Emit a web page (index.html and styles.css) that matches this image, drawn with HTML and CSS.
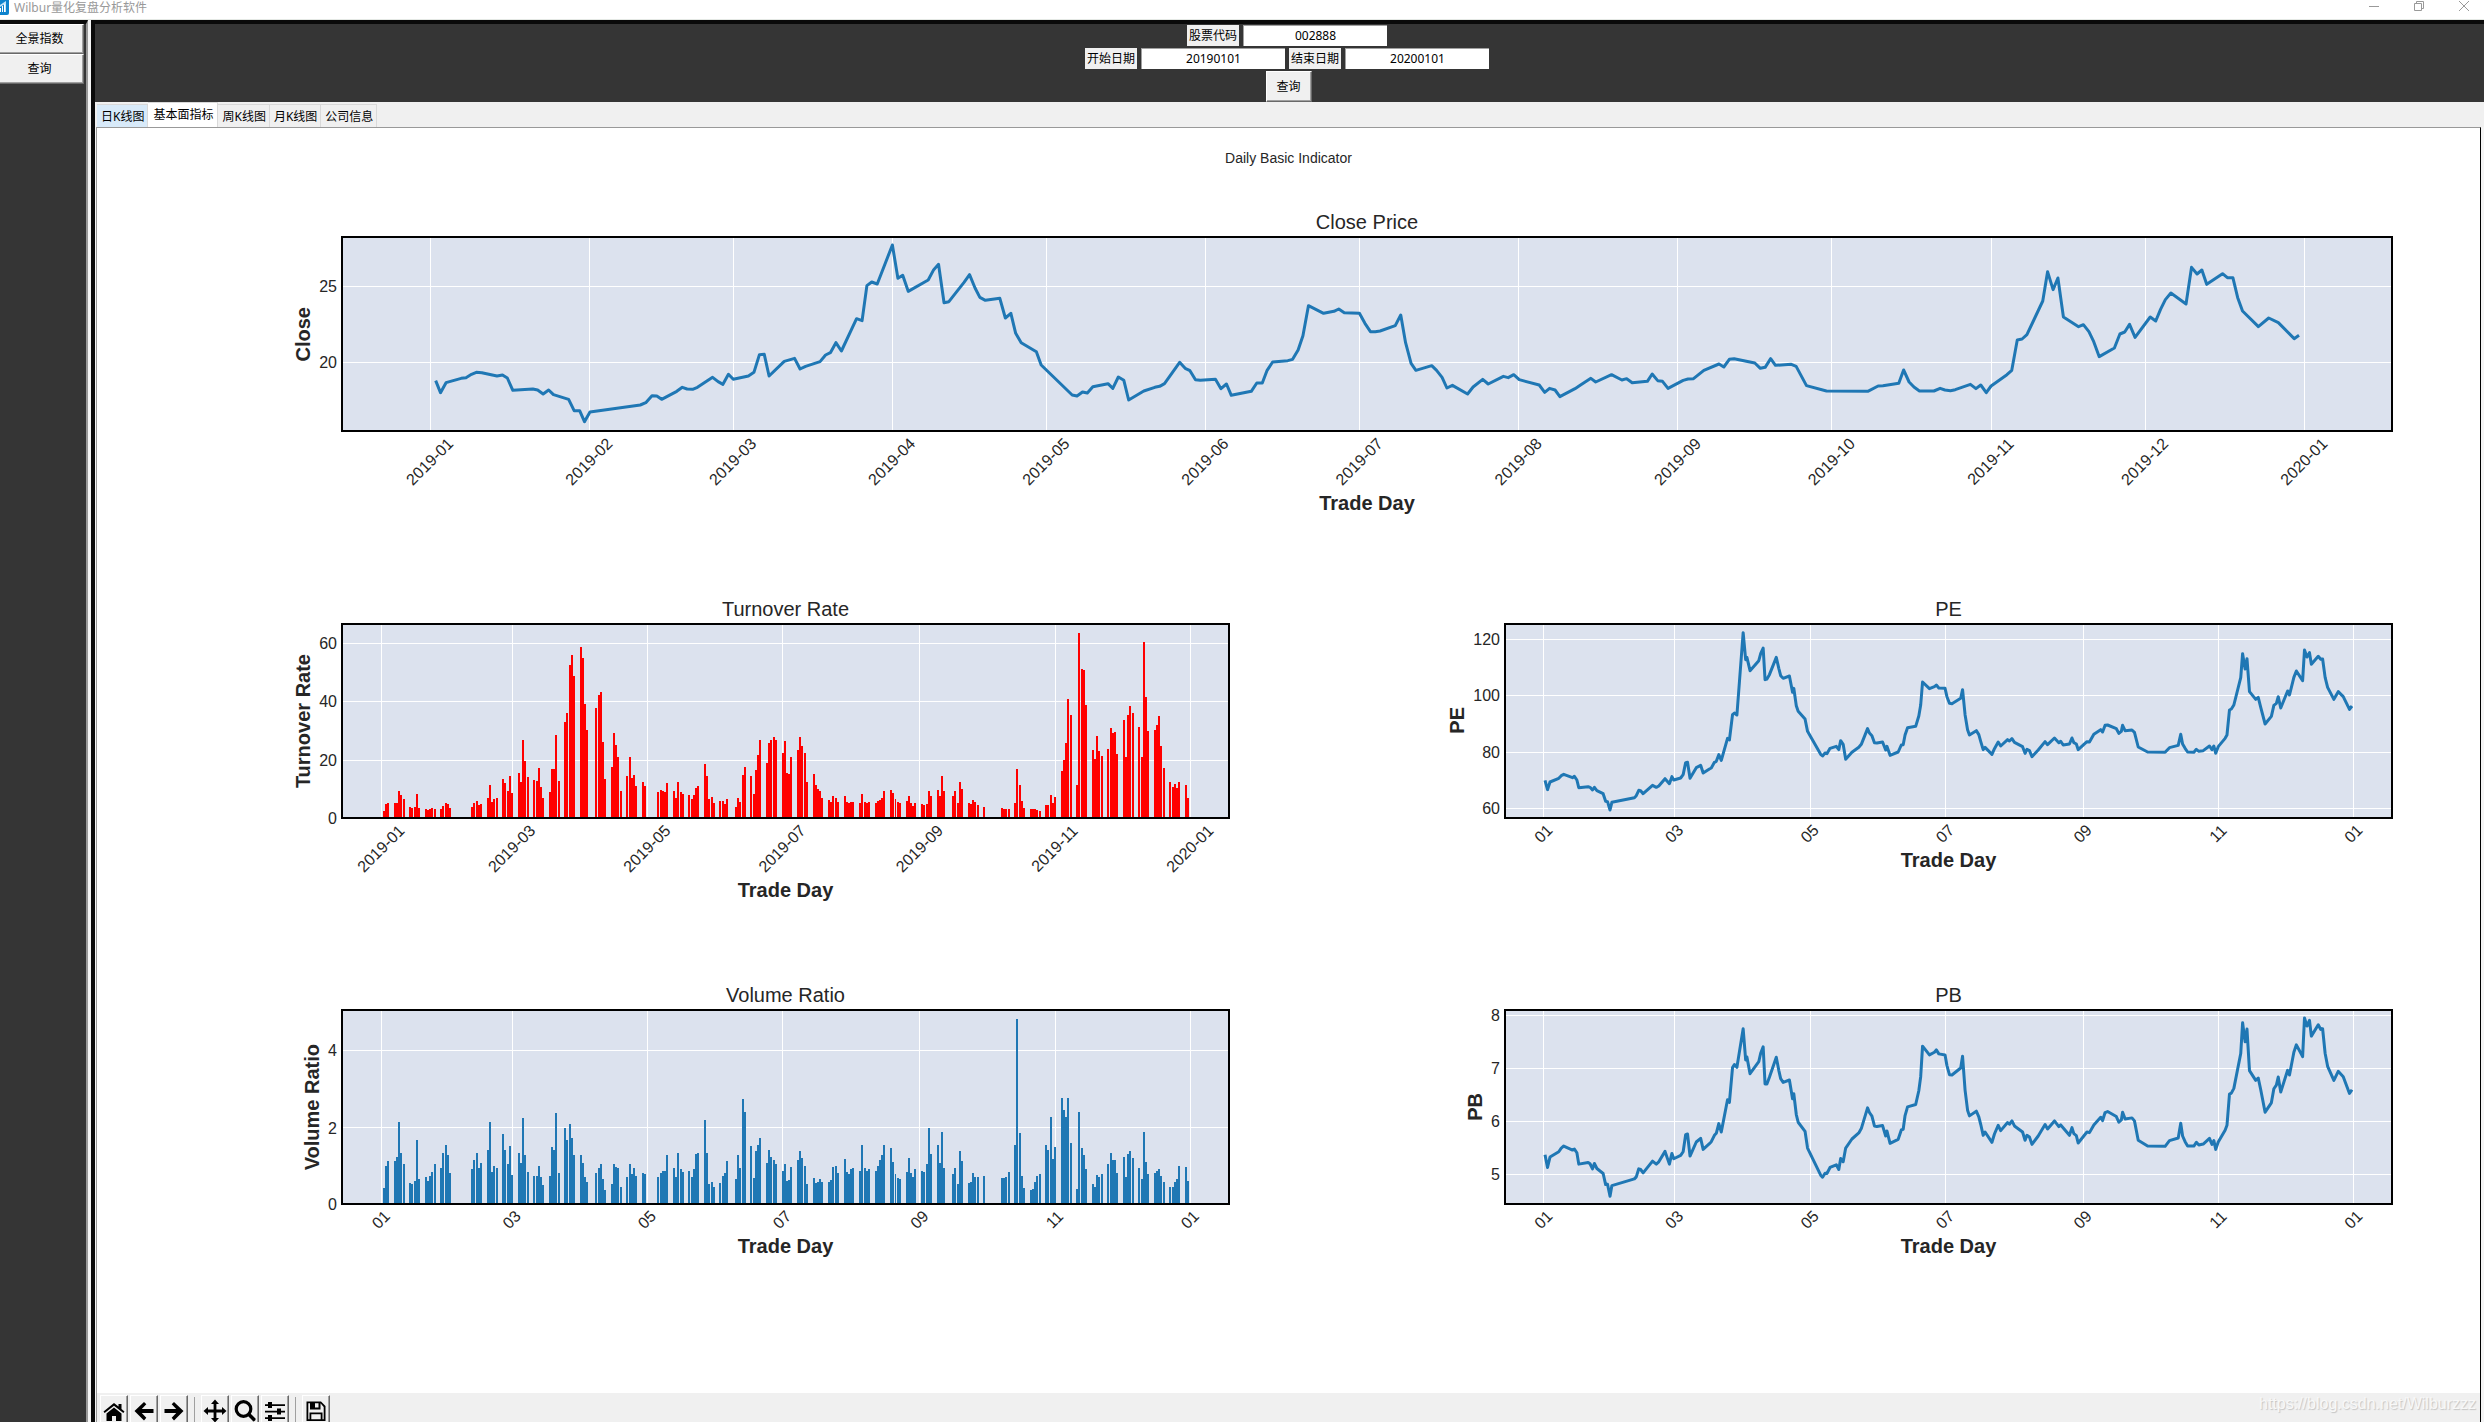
FILE: index.html
```html
<!DOCTYPE html>
<html lang="zh-CN">
<head>
<meta charset="utf-8">
<title>Wilbur量化复盘分析软件</title>
<link rel="stylesheet" href="styles.css">
</head>
<body>
<header class="titlebar">
  <svg class="app-icon" width="9" height="15" viewBox="0 0 9 15" aria-hidden="true">
    <path d="M0 0H9V13Q9 15 7 15H0Z" fill="#0e83cd"/>
    <path d="M0 8H1V12H0ZM2 6H3V12H2ZM4 4H6V12H4Z" fill="#fff"/>
    <path d="M0 5L6 1V12H5V4L0 7Z" fill="#bfe2f7"/>
  </svg>
  <h1 class="app-title">Wilbur量化复盘分析软件</h1>
  <div class="window-controls">
    <button type="button" aria-label="最小化"><svg width="10" height="10" viewBox="0 0 10 10"><path d="M0 5.5H10"/></svg></button>
    <button type="button" aria-label="还原"><svg width="10" height="10" viewBox="0 0 10 10"><path d="M.5 2.5H7.5V9.5H.5ZM2.5 2.5V.5H9.5V7.5H7.5"/></svg></button>
    <button type="button" aria-label="关闭"><svg width="10" height="10" viewBox="0 0 10 10"><path d="M0 0L10 10M10 0L0 10"/></svg></button>
  </div>
</header>
<div class="workspace">
  <nav class="sidebar">
    <button type="button" class="raised">全景指数</button>
    <button type="button" class="raised">查询</button>
  </nav>
  <main class="main">
    <form class="query">
      <div class="query-row">
        <label for="code">股票代码</label><input id="code" type="text" value="002888">
      </div>
      <div class="query-row">
        <label for="start">开始日期</label><input id="start" type="text" value="20190101">
        <label for="end">结束日期</label><input id="end" type="text" value="20200101">
      </div>
      <button type="button" class="raised query-button">查询</button>
    </form>
    <div class="tabs" role="tablist">
      <button type="button" role="tab" class="tab tab-hover">日K线图</button>
      <button type="button" role="tab" class="tab tab-selected" aria-selected="true">基本面指标</button>
      <button type="button" role="tab" class="tab">周K线图</button>
      <button type="button" role="tab" class="tab">月K线图</button>
      <button type="button" role="tab" class="tab">公司信息</button>
    </div>
    <section class="pane">
      <div class="canvas">
        <h2 class="canvas-title">Daily Basic Indicator</h2>
        <div class="charts">
          <figure class="chart chart-wide long-ticks" data-chart="close">
            <figcaption>Close Price</figcaption>
            <div class="y-side"><span class="y-label">Close</span><svg class="y-axis"></svg></div>
            <svg class="plot"></svg><svg class="x-axis"></svg>
            <span class="x-label">Trade Day</span>
          </figure>
          <figure class="chart long-ticks" data-chart="turnover">
            <figcaption>Turnover Rate</figcaption>
            <div class="y-side"><span class="y-label">Turnover Rate</span><svg class="y-axis"></svg></div>
            <svg class="plot"></svg><svg class="x-axis"></svg>
            <span class="x-label">Trade Day</span>
          </figure>
          <figure class="chart" data-chart="pe">
            <figcaption>PE</figcaption>
            <div class="y-side"><span class="y-label">PE</span><svg class="y-axis"></svg></div>
            <svg class="plot"></svg><svg class="x-axis"></svg>
            <span class="x-label">Trade Day</span>
          </figure>
          <figure class="chart" data-chart="volume">
            <figcaption>Volume Ratio</figcaption>
            <div class="y-side"><span class="y-label">Volume Ratio</span><svg class="y-axis"></svg></div>
            <svg class="plot"></svg><svg class="x-axis"></svg>
            <span class="x-label">Trade Day</span>
          </figure>
          <figure class="chart" data-chart="pb">
            <figcaption>PB</figcaption>
            <div class="y-side"><span class="y-label">PB</span><svg class="y-axis"></svg></div>
            <svg class="plot"></svg><svg class="x-axis"></svg>
            <span class="x-label">Trade Day</span>
          </figure>
        </div>
      </div>
      <div class="toolbar" role="toolbar">
        <button type="button" class="tool" aria-label="Home"><svg viewBox="0 0 24 24"><path d="M12 8.5L4.500 14.500V22H10V17H14V22H19.500V14.500Z"/><path d="M12 4L1.500 12.500L2.700 14L12 6.700L21.300 14L22.500 12.500L19.500 10V5H16.500V7.600Z"/></svg></button>
        <button type="button" class="tool" aria-label="Back"><svg viewBox="0 0 24 24"><path d="M12 3L14.300 5.300L9.800 9.900H21.500V14.100H9.800L14.300 18.700L12 21.500L2.500 12Z"/></svg></button>
        <button type="button" class="tool" aria-label="Forward"><svg viewBox="0 0 24 24"><path d="M12 3L9.700 5.300L14.200 9.900H2.500V14.100H14.200L9.700 18.700L12 21.500L21.500 12Z"/></svg></button>
        <span class="separator"></span>
        <button type="button" class="tool" aria-label="Pan"><svg viewBox="0 0 24 24"><path d="M12 .5L16 5H13.400V10.600H19V8L23.500 12L19 16V13.400H13.400V19H16L12 23.500L8 19H10.600V13.400H5V16L.5 12L5 8V10.600H10.600V5H8Z"/></svg></button>
        <button type="button" class="tool" aria-label="Zoom"><svg viewBox="0 0 24 24"><circle cx="10.500" cy="10" r="7.300" fill="none" stroke="#000" stroke-width="3.200"/><path d="M14.500 16.500L17 14L22.500 19.500Q23 21 21.500 22T19.500 21.500Z"/></svg></button>
        <button type="button" class="tool" aria-label="Subplots"><svg viewBox="0 0 24 24"><path d="M2 5.200H5V3H9V5.200H22V7H9V9H5V7H2ZM2 11.700H14V9.500H18V11.700H22V13.500H18V15.500H14V13.500H2ZM2 18.200H5V16H9V18.200H22V20H9V22H5V20H2Z"/></svg></button>
        <span class="separator"></span>
        <button type="button" class="tool" aria-label="Save"><svg viewBox="0 0 24 24"><path fill-rule="evenodd" d="M2.500 2.500H17L21.500 7V22H2.500ZM4.300 4.300V20.200H5.500V13.500H18.500V20.200H19.700V8L16.500 4.300V10.500H6V4.300ZM11 4.300V8.500H14.500V4.300ZM7.300 15.200V20.200H16.700V15.200Z"/></svg></button>
      </div>
    </section>
  </main>
</div>
<div class="watermark">https://blog.csdn.net/Wilburzzz</div>
<script src="charts.js"></script>
</body>
</html>
```

FILE: styles.css
```css
* { box-sizing: border-box; }

body {
  margin: 0;
  height: 100vh;
  display: flex;
  flex-direction: column;
  overflow: hidden;
  position: relative;
  background: #f0f0f0;
  color: #000;
  font: 12px/16px "Noto Sans", "Noto Sans CJK SC", sans-serif;
}

button, input {
  font: inherit;
  color: inherit;
  border-radius: 0;
  margin: 0;
  padding: 0;
}

/* window title bar */
.titlebar {
  flex: none;
  display: flex;
  align-items: flex-start;
  height: 20px;
  background: #fff;
  border-bottom: 1px solid #e4e8e4;
  color: #999;
}
.app-icon { flex: none; }
.app-title {
  margin: 0 auto 0 5px;
  font-size: 12px;
  line-height: 16px;
  font-weight: 400;
}
.window-controls {
  display: flex;
  gap: 35px;
  padding: 1px 15px 0 0;
}
.window-controls button {
  display: flex;
  border: 0;
  background: none;
}
.window-controls path { fill: none; stroke: #999; }

.workspace {
  flex: 1;
  min-height: 0;
  display: flex;
  background: #f4f4f4;
}

.raised {
  background: #f0f0f0;
  border: 1px solid;
  border-color: #fff #696969 #696969 #fff;
  box-shadow: inset -1px -1px #a0a0a0;
}

.sidebar {
  flex: none;
  width: 88px;
  display: flex;
  flex-direction: column;
  background: #353535;
  border-top: 4px solid #0a0a0a;
  border-right: 2px solid #999;
  padding-right: 2px;
  margin-right: 3px;
}
.sidebar .raised { height: 30px; padding-right: 4px; border-left: 0; }

.main {
  flex: 1;
  min-width: 0;
  display: flex;
  flex-direction: column;
  border: solid #0a0a0a;
  border-width: 4px 0 0 4px;
}

/* query form */
.query {
  flex: none;
  display: flex;
  flex-direction: column;
  align-items: center;
  padding-top: 1px;
  padding-right: 5px;
  background: #353535;
}
.query-row { display: flex; gap: 4px; padding-bottom: 2px; }
.query label {
  width: 52px;
  line-height: 21px;
  text-align: center;
  background: #f0f0f0;
}
.query input {
  width: 144px;
  height: 21px;
  padding-bottom: 1px;
  text-align: center;
  background: #fff;
  border: 0;
  border-top: 1px solid #a0a0a0;
  border-left: 1px solid #a0a0a0;
}
.query-button { width: 46px; height: 31px; margin-left: 3px; }

/* notebook tabs */
.tabs {
  flex: none;
  display: flex;
  align-items: flex-end;
  height: 25px;
  padding-left: 2px;
  background: #f0f0f0;
}
.tab {
  height: 23px;
  padding: 1px 3px 0 4px;
  background: #f0f0f0;
  border: 1px solid #d9d9d9;
  border-left: 0;
  border-bottom: 0;
}
.tab-hover { background: #d8eaf9; }
.tab-selected { height: 25px; padding: 0 4px 1px 5px; background: #fff; }

.pane {
  flex: 1;
  min-height: 0;
  display: flex;
  flex-direction: column;
  margin: 0 3px 0 1px;
  background: #fff;
  border: 1px solid #999;
  border-right-color: #000;
  border-bottom: 0;
}

/* figure canvas */
.canvas {
  flex: 1;
  display: flex;
  flex-direction: column;
  padding: 20px 88px 26px 165px;
  color: #262626;
  font-family: "Liberation Sans", Arial, sans-serif;
}
.canvas-title {
  margin: 0;
  /* the title centres on the canvas, the plots on the axes area */
  padding-right: 77px;
  height: 59px;
  font-size: 14px;
  line-height: 20px;
  font-weight: 400;
  text-align: center;
}
.charts {
  flex: 1;
  display: grid;
  grid-template-columns: 1fr 1fr;
  grid-template-rows: repeat(3, 1fr);
  column-gap: 196px;
}
.chart {
  margin: 0;
  display: grid;
  grid-template-columns: 80px 1fr;
  grid-template-rows: 30px 194px 30px 24px;
  grid-template-areas: ". title" "side plot" ". ticks" ". label";
}
.chart-wide { grid-column: 1 / -1; }
.long-ticks { grid-template-rows: 30px 194px 60px 24px; }
.chart figcaption {
  grid-area: title;
  font-size: 20px;
  line-height: 30px;
  text-align: center;
}
.y-side {
  grid-area: side;
  display: flex;
  justify-content: flex-end;
  align-items: center;
  gap: 4px;
}
.y-label {
  writing-mode: vertical-rl;
  transform: rotate(180deg);
  font-size: 20px;
  line-height: 24px;
  font-weight: 700;
  white-space: nowrap;
}
.x-label {
  grid-area: label;
  font-size: 20px;
  line-height: 24px;
  font-weight: 700;
  text-align: center;
}
.y-axis { height: 100%; }
.plot {
  grid-area: plot;
  width: 100%;
  height: 100%;
  background: #dce2ee;
}
.x-axis { grid-area: ticks; width: 100%; height: 100%; }
.chart svg { overflow: visible; }
.chart text { font-size: 16px; fill: #262626; }
.grid-line { stroke: #fff; stroke-width: 1; shape-rendering: crispEdges; }
.frame { fill: none; stroke: #000; stroke-width: 2; shape-rendering: crispEdges; }
.series {
  fill: none;
  stroke: #1f77b4;
  stroke-width: 3;
  stroke-linejoin: round;
  vector-effect: non-scaling-stroke;
}
.bars { shape-rendering: crispEdges; }
.bars-red { fill: #f00; }
.bars-blue { fill: #1f77b4; }

/* plot navigation */
.toolbar {
  flex: none;
  display: flex;
  align-items: flex-start;
  gap: 2px;
  height: 29px;
  padding: 2px 0 0 3px;
  overflow: hidden;
  background: #f0f0f0;
}
.tool {
  flex: none;
  width: 28px;
  height: 32px;
  display: flex;
  align-items: center;
  justify-content: center;
  background: #f0f0f0;
  border: 1px solid;
  border-color: #fff #696969 #696969 #fff;
  box-shadow: inset -1px 0 #a0a0a0;
}
.tool svg { width: 24px; height: 24px; flex: none; }
.separator { width: 1px; height: 30px; margin: 2px 4px 0; background: #a0a0a0; }

.watermark {
  position: absolute;
  right: 8px;
  bottom: 8px;
  color: #f8f8f8;
  font: 16px/20px "Liberation Sans", Arial, sans-serif;
  text-shadow: 1px 1px 1px #c4c4c4;
}
```

FILE: charts.js
```js
// Bar values, one group per calendar week, Monday to Friday; "-" is a closed day.
const turnover = `- - 2.5 4.8 5|5 5 9.3 8 6.5|3.8 3.4 3.8 8.3 3.4|3.1 2.8 3.1 3.4 3.1|3.1 4.2 5.1 4.9 3.4|-|3.8 5 5.9 4.5 4.8|6.8 11.3 5.5 6.5 6.8|13.4 12 9.3 14.4 8.6|15.4 12.4 26.8 19.6 14.1|13 12.8 17.2 10.6 6.8|9 16.8 16.8 28.5 12.7|33 36 52.6 56 48.8|58.8 55 39.2 30.3|37.8 42.3 43.3 26.1 13.4|17.5 29.2 25.1 21 9.3|14.4 21 13.7 14.8 11|12.4 11|9 9.6 9.3 9 12|9.3 6.9 12.4 9 8.3|8 6.6 8 10.3 11|18.6 14.4 6.6 7.2 5.1|5.9 5.9 4.8 6.5|3.8 6.9 5.5 14.8 17.5|14.4 8.3 16.5 21.7 26.8|19 25.8 26.8 27.8 26.8|22.4 26.5 15.5 15.2 21|23.4 27.8 24.8 22.4 12.4|15.2 11.3 10 9.3 6.9|6.2 5.5 7.5 6.9 5.5|7.5 5.5 5.2 5.5 5.5|5.1 8.3 5.5 5.1 5.5|5.1 5.9 6.2 6.9 9.3|9.6 8.6 6.5 5.5 5.1|5.9 7.5 5.1 4.1 5.1|4.8 4.5 4.8 9.3 7.5|9.6 7.5 14.4 9.3|7.5 9.3 5.1 12.4 10|5.1 4.8 6.2 5.5 4.5|3.8|- 3.4 3.1 3.1 3.1|5.1 16.8 11.3 5.9 3.4|3.1 3.1 3.1 2.8 2.4|4.5 4.5 8 5.1 7.2|16.1 20 25.8 41 35.4|11.3 63.5 51.2 50.9 38.9|23.4 20.3 28.2 23 21.3|23.7 31 29.2 29.6 22|33.7 21 35.4 38.5 36|31.3 21 60.5 41.6 29.9|30.3 32 35 24.8 17.2|12.4 10.6 11.7 10.3 12.4|11.4 6.9`;
const volume = `- - .42 1 1.13|1.13 1.23 2.13 1.34 1.03|.55 .52 .6 1.66 .66|.7 .6 .73 .84 1.03|.95 1.34 1.55 1.28 .82|-|.92 1.16 1.32 .95 1.08|1.42 2.13 .84 1 .95|1.82 1.4 1.03 1.5 .76|1.32 1.06 2.23 1.27 .84|.73 .73 1 .7 .5|.73 1.48 1.4 2.37 .82|1.98 1.68 2.08 1.71 1.28|1.28 1.08 .7 .58|.82 .95 1.05 .66 .37|.52 1.03 .97 .94 .44|.7 1.05 .77 .95 .73|.82 .77|.7 .82 .87 .87 1.27|.95 .7 1.34 .92 .84|.87 .7 .92 1.31 1.34|2.18 1.34 .52 .58 .44|.55 .73 .82 1.13|.66 1.27 .95 2.73 2.4|1.5 .68 1.37 1.53 1.71|1.08 1.42 1.23 1.16 1.05|.87 1.03 .6 .63 .97|1.16 1.37 1.21 1 .52|.68 .55 .58 .66 .58|.58 .63 .97 1 .82|1.18 .84 .79 .9 .95|.87 1.53 .95 .87 .92|.87 1 1.16 1.27 1.55|1.45 1.1 .79 .68 .66|.84 1.21 .82 .7 .92|.87 .84 1.03 1.98 1.31|1.55 1.08 1.87 .95|.79 .95 .52 1.37 1.13|.55 .58 .82 .7 .7|.73|- .68 .68 .7 .84|1.55 4.83 1.84 .73 .42|.37 .4 .58 .73 .79|1.55 1.42 2.26 1.18 1.48|2.76 2.45 2.28 2.76 1.6|.4 2.4 1.45 1.27 .92|.52 .44 .76 .7 .79|1.03 1.34 1.16 1.16 .82|1.23 .7 1.31 1.37 1.21|.95 .66 1.87 1.1 .79|.82 .87 .9 .73 .58|.44 .44 .58 .66 1|.97 .6`;

const closeLine = `226,542 233,578 241,548 263,535 270,533 278,523 285,517 293,518 315,528 323,525 330,534 338,571 367,567 374,570 382,582 390,570 397,584 419,598 427,632 435,632 442,665 450,636 523,615 531,608 540,587 547,588 554,598 576,574 584,562 591,567 599,568 606,562 628,532 636,545 643,553 651,523 658,538 680,528 688,517 696,464 703,463 710,528 732,484 747,475 755,507 763,499 784,485 792,465 799,458 807,428 815,453 837,356 845,362 852,257 859,246 867,252 889,135 897,235 904,226 912,274 941,240 949,209 956,193 964,308 971,305 993,247 1001,224 1009,264 1016,292 1024,301 1045,295 1053,354 1061,340 1068,400 1076,428 1098,455 1105,495 1150,585 1157,588 1165,576 1172,579 1180,560 1202,551 1209,565 1217,531 1225,541 1232,600 1254,573 1270,562 1277,559 1284,551 1306,487 1314,505 1321,512 1329,539 1336,541 1358,538 1366,566 1374,552 1381,586 1410,574 1418,549 1426,549 1433,511 1441,486 1463,482 1470,478 1478,450 1485,407 1493,317 1515,340 1530,334 1537,327 1545,338 1567,340 1575,370 1583,395 1590,395 1597,393 1619,377 1627,345 1634,428 1642,490 1649,511 1672,497 1679,511 1687,532 1694,564 1702,556 1724,582 1732,561 1746,538 1754,552 1776,529 1783,533 1791,524 1799,539 1828,555 1836,577 1843,565 1851,570 1858,590 1880,566 1888,555 1903,535 1910,546 1933,524 1948,540 1955,536 1963,548 1985,544 1992,522 2000,542 2007,544 2015,565 2037,541 2044,537 2052,536 2067,511 2089,492 2096,501 2104,478 2111,476 2141,489 2149,505 2156,502 2164,476 2171,496 2194,493 2201,499 2216,557 2245,573 2305,574 2320,558 2327,557 2350,550 2357,510 2365,546 2372,561 2380,573 2401,573 2410,565 2417,570 2425,572 2432,569 2454,553 2462,566 2469,555 2477,578 2484,558 2507,524 2514,511 2522,420 2529,417 2536,404 2559,303 2566,215 2574,269 2581,234 2589,351 2611,380 2618,374 2626,395 2633,425 2641,470 2663,444 2671,402 2678,396 2685,373 2693,412 2715,351 2723,363 2730,328 2737,299 2745,279 2767,312 2775,202 2783,222 2790,210 2797,253 2820,221 2827,233 2835,233 2842,293 2849,333 2872,380 2887,354 2901,368 2924,416 2931,406`;
const peLine = `185,571 189,599 193,576 207,565 211,557 215,553 229,563 232,559 236,570 239,593 254,590 257,592 261,600 264,592 268,602 278,611 282,634 285,635 289,660 292,637 328,623 331,617 335,601 338,602 342,611 357,586 363,592 367,588 377,566 384,581 388,560 391,570 402,564 406,554 410,518 413,517 417,565 427,533 434,526 438,549 448,537 451,534 456,517 459,514 463,494 467,511 477,445 480,450 485,374 488,369 492,375 502,128 506,209 508,202 513,242 527,212 530,191 534,174 537,269 540,267 544,254 555,202 559,235 562,257 566,265 576,258 581,307 583,295 587,347 590,364 601,387 605,424 626,493 629,498 633,489 636,491 641,475 651,469 655,479 658,452 662,463 666,508 676,487 687,472 691,463 701,416 704,429 708,437 712,458 716,459 725,456 730,480 732,469 737,496 750,486 755,465 758,464 761,435 765,413 778,409 783,378 786,345 789,276 800,296 808,290 811,285 815,294 825,295 828,320 832,340 836,341 850,325 853,299 857,374 861,419 864,435 875,422 879,434 882,454 886,479 889,472 900,493 904,476 910,456 914,468 925,449 928,453 932,446 936,457 949,470 953,490 956,478 960,482 964,500 974,480 985,455 989,464 1000,444 1007,458 1010,454 1014,465 1024,462 1028,444 1031,458 1035,462 1038,479 1052,455 1056,456 1063,433 1074,419 1077,426 1081,406 1085,405 1099,416 1103,430 1107,424 1109,406 1113,422 1124,420 1128,427 1134,471 1149,486 1177,487 1184,473 1198,466 1202,433 1205,462 1209,475 1213,486 1223,487 1227,478 1231,484 1238,482 1248,468 1252,479 1255,468 1258,490 1262,470 1273,445 1276,435 1280,360 1283,357 1287,345 1298,263 1301,191 1305,237 1308,206 1312,305 1322,328 1326,322 1330,352 1337,402 1347,379 1351,346 1355,340 1358,320 1362,354 1373,303 1376,315 1383,262 1387,243 1397,272 1400,180 1404,201 1408,188 1411,223 1422,199 1426,208 1429,207 1433,262 1437,292 1447,328 1454,305 1462,320 1472,358 1476,348`;
const pbLine = `185,528 189,566 193,535 207,519 211,508 215,502 229,514 232,511 236,522 239,556 254,551 257,555 261,570 264,554 268,569 278,584 282,617 285,616 289,652 292,620 328,600 331,594 335,570 338,572 342,582 357,547 363,556 367,549 377,518 384,556 388,524 391,540 402,530 406,519 410,468 413,466 417,532 427,490 434,479 438,512 448,495 451,489 456,470 459,464 463,435 467,460 477,364 480,372 485,268 488,259 492,267 502,152 506,245 508,236 513,286 527,250 530,225 534,206 537,317 540,317 544,297 555,237 559,276 562,301 566,312 576,305 581,361 583,346 587,408 590,431 601,458 605,508 626,589 629,595 633,583 636,584 641,566 651,558 655,572 658,539 662,549 666,508 676,481 687,463 691,450 701,388 704,402 708,413 712,442 716,444 725,441 730,472 732,457 737,494 750,482 755,454 758,452 761,411 765,385 778,378 783,337 786,295 789,204 800,230 808,222 811,215 815,227 825,230 828,262 832,289 836,290 850,269 853,234 857,335 861,395 864,412 875,398 879,415 882,437 886,470 889,460 900,491 904,466 910,440 914,456 925,432 928,437 932,427 936,442 949,460 953,485 956,470 960,475 964,497 974,472 985,438 989,451 1000,427 1007,444 1010,439 1024,470 1028,447 1031,465 1035,471 1038,493 1052,460 1056,462 1063,439 1074,416 1077,426 1081,402 1085,399 1099,414 1103,431 1107,424 1109,401 1113,421 1124,418 1128,427 1134,485 1149,502 1177,503 1184,486 1198,478 1202,434 1205,472 1209,489 1213,502 1223,502 1227,491 1231,499 1238,496 1248,479 1252,497 1255,486 1258,512 1262,490 1273,455 1276,440 1280,347 1283,344 1287,330 1298,226 1301,134 1305,191 1308,153 1312,277 1322,306 1326,299 1330,334 1337,401 1347,373 1351,331 1355,320 1358,296 1362,341 1373,276 1376,290 1383,222 1387,200 1397,235 1400,120 1404,144 1408,127 1411,174 1422,140 1426,154 1429,152 1433,225 1437,264 1447,306 1454,279 1462,295 1472,345 1476,334`;

// Days since 2019-01-01 for the first of each month.
const monthly = { '2019-01': 0, '2019-02': 31, '2019-03': 59, '2019-04': 90, '2019-05': 120, '2019-06': 151, '2019-07': 181, '2019-08': 212, '2019-09': 243, '2019-10': 273, '2019-11': 304, '2019-12': 334, '2020-01': 365 };
const bimonthly = Object.entries(monthly).filter((_, i) => i % 2 === 0);
const short = bimonthly.map(([name, day]) => [name.slice(5), day]);

// box: plot area in plot units; origin/perDay: x of day 0 and x step; yTicks: label -> y.
const charts = {
  close: { box: [90, 111, 2976, 582], origin: 218, perDay: 7.454, xTicks: Object.entries(monthly), yTicks: [['25', 259], ['20', 487]], line: closeLine },
  turnover: { box: [99, 102, 1420, 582], origin: 162, perDay: 3.548, xTicks: bimonthly, yTicks: [['60', 160], ['40', 334], ['20', 511], ['0', 684]], bars: turnover, unit: 8.73, color: 'red' },
  pe: { box: [121, 102, 1419, 582], origin: 183, perDay: 3.551, xTicks: short, yTicks: [['120', 148], ['100', 317], ['80', 487], ['60', 655]], line: peLine },
  volume: { box: [99, 96, 1420, 579], origin: 162, perDay: 3.548, xTicks: short, yTicks: [['4', 217], ['2', 448], ['0', 675]], bars: volume, unit: 114.5, color: 'blue' },
  pb: { box: [121, 96, 1419, 579], origin: 183, perDay: 3.551, xTicks: short, yTicks: [['8', 112], ['7', 271], ['6', 428], ['5', 586]], line: pbLine }
};

for (const figure of document.querySelectorAll('.chart')) {
  const c = charts[figure.dataset.chart];
  const [left, top, width, height] = c.box;
  const px = day => ((c.origin + c.perDay * day - left) / width * 100).toFixed(2) + '%';
  const py = y => ((y - top) / height * 100).toFixed(2) + '%';

  let marks = '';
  if (c.line) {
    marks = `<polyline class="series" points="${c.line}"/>`;
  } else {
    const base = top + height;
    c.bars.split('|').forEach((week, w) => week.split(' ').forEach((value, d) => {
      if (value === '-') return;
      const h = value * c.unit;
      const x = c.origin + c.perDay * (7 * w - 1 + d - 0.45);
      marks += `<rect x="${x.toFixed(1)}" y="${(base - h).toFixed(1)}" width="${(c.perDay * 0.9).toFixed(1)}" height="${h.toFixed(1)}"/>`;
    }));
    marks = `<g class="bars bars-${c.color}">${marks}</g>`;
  }
  figure.querySelector('.plot').innerHTML =
    c.xTicks.map(([, day]) => `<line class="grid-line" x1="${px(day)}" x2="${px(day)}" y1="0" y2="100%"/>`).join('') +
    c.yTicks.map(([, y]) => `<line class="grid-line" y1="${py(y)}" y2="${py(y)}" x1="0" x2="100%"/>`).join('') +
    `<svg width="100%" height="100%" viewBox="${c.box.join(' ')}" preserveAspectRatio="none">${marks}</svg>` +
    '<rect class="frame" width="100%" height="100%"/>';

  const drop = c.xTicks[0][0].length > 2 ? 31 : 16;
  figure.querySelector('.x-axis').innerHTML = c.xTicks.map(([name, day]) =>
    `<svg x="${px(day)}" y="${drop}"><text transform="rotate(-45)" text-anchor="middle" dy=".3em">${name}</text></svg>`).join('');

  const yAxis = figure.querySelector('.y-axis');
  const digits = Math.max(...c.yTicks.map(([name]) => name.length));
  yAxis.style.width = digits * 9 + 5 + 'px';
  yAxis.innerHTML = c.yTicks.map(([name, y]) =>
    `<text x="${digits * 9}" y="${py(y)}" text-anchor="end" dy=".36em">${name}</text>`).join('');
}
```
